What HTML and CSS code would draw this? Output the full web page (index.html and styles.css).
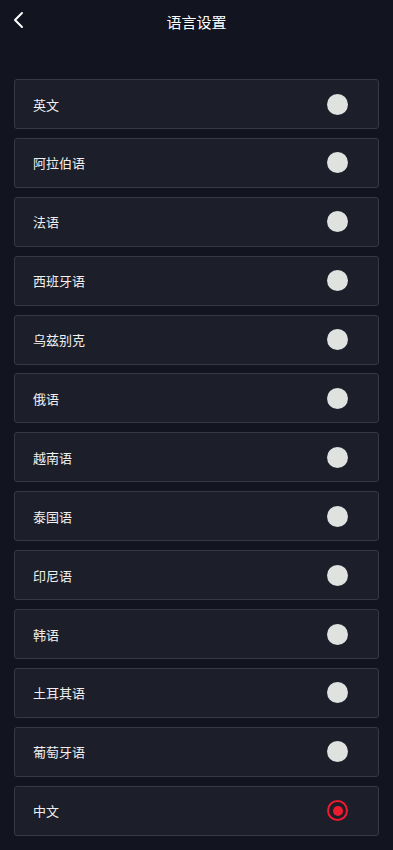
FILE: index.html
```html
<!DOCTYPE html>
<html lang="zh">
<head>
  <meta charset="UTF-8" />
  <meta name="viewport" content="width=device-width, initial-scale=1.0" />
  <title>语言设置</title>
  <link rel="stylesheet" href="styles.css">
</head>
<body>
  <header class="topbar">
    <a class="back" href="#">
      <svg width="14" height="18" viewBox="0 0 14 18"><path d="M10 2 L3 9 L10 16" fill="none" stroke="#fff" stroke-width="2" stroke-linecap="round" stroke-linejoin="round"/></svg>
    </a>
    <h1>语言设置</h1>
  </header>
  <div class="lang-list" id="list"></div>

  <script>
    const langs = ["英文", "阿拉伯语", "法语", "西班牙语", "乌兹别克", "俄语", "越南语", "泰国语", "印尼语", "韩语", "土耳其语", "葡萄牙语", "中文"];
    const current = "中文";
    const list = document.getElementById('list');

    langs.forEach(name => {
      const row = document.createElement('div');
      row.className = 'lang-item';
      row.innerHTML = `
        <span class="lang-name">${name}</span>
        <span class="radio ${name === current ? 'checked' : ''}"></span>
      `;
      list.appendChild(row);
    });
  </script>
</body>
</html>
```

FILE: styles.css
```css
body {
  margin: 0;
  background: #12141f;
  color: #fff;
  font-family: 'Noto Sans CJK SC', 'Noto Sans', sans-serif;
}

.topbar {
  height: 42px;
  display: flex;
  align-items: center;
  justify-content: center;
  position: relative;
}

.topbar h1 {
  margin: 0;
  font-size: 15px;
  font-weight: normal;
}

.back {
  position: absolute;
  left: 12px;
  top: 11px;
  display: flex;
}

.lang-list {
  padding: 37px 14px 14px;
  display: flex;
  flex-direction: column;
  gap: 8.9px;
}

.lang-item {
  height: 48px;
  display: flex;
  align-items: center;
  justify-content: space-between;
  padding: 0 30px 0 18px;
  background: #1c1e2a;
  border: 1px solid #363845;
  border-radius: 3px;
}

.lang-name {
  font-size: 13px;
  color: #f0f0f0;
}

.radio {
  width: 21px;
  height: 21px;
  border-radius: 50%;
  background: #dfe2de;
  box-sizing: border-box;
}

.radio.checked {
  background: transparent;
  border: 2.5px solid #ec1b2e;
  display: flex;
  align-items: center;
  justify-content: center;
}

.radio.checked::after {
  content: "";
  width: 10px;
  height: 10px;
  border-radius: 50%;
  background: #ec1b2e;
}
```
